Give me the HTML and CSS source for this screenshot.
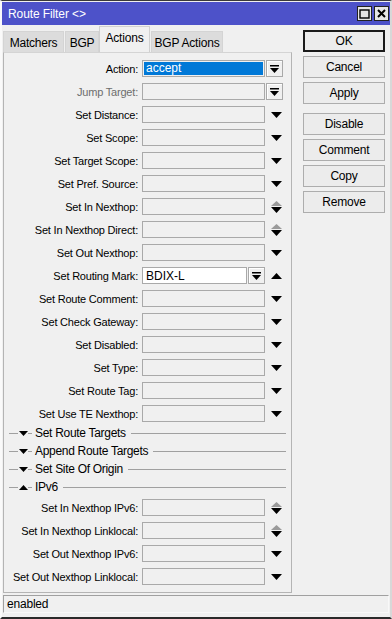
FILE: index.html
```html
<!DOCTYPE html>
<html lang="en">
<head>
    <meta charset="UTF-8">
    <title>Route Filter</title>
    <link rel="stylesheet" href="styles.css">
</head>
<body>
<div class="window">
    <div class="titlebar">
        <span class="title">Route Filter &lt;&gt;</span>
        <div class="winbtns">
            <span class="winbtn"><svg width="11" height="10" viewBox="0 0 11 10"><rect x="1" y="1" width="9" height="8" fill="none" stroke="#000" stroke-width="1.4"/></svg></span>
            <span class="winbtn"><svg width="9" height="9" viewBox="0 0 9 9"><path d="M1 1 L8 8 M8 1 L1 8" stroke="#000" stroke-width="2"/></svg></span>
        </div>
    </div>

    <div class="main">
        <div class="left">
            <div class="tabs">
                <div class="tab t-matchers">Matchers</div>
                <div class="tab t-bgp">BGP</div>
                <div class="tab active t-actions">Actions</div>
                <div class="tab t-bgpact">BGP Actions</div>
            </div>

            <div class="panel">
                <div class="row">
                    <span class="lbl">Action:</span>
                    <span class="field sel"><span class="hl">accept</span></span>
                    <span class="ddbtn"><svg width="9" height="8" viewBox="0 0 9 8"><rect x="0" y="0" width="9" height="1.5" fill="#000"/><path d="M0 3 H9 L4.5 8 Z" fill="#000"/></svg></span>
                </div>
                <div class="row">
                    <span class="lbl off">Jump Target:</span>
                    <span class="field"></span>
                    <span class="ddbtn"><svg width="9" height="8" viewBox="0 0 9 8"><rect x="0" y="0" width="9" height="1.5" fill="#000"/><path d="M0 3 H9 L4.5 8 Z" fill="#000"/></svg></span>
                </div>
                <div class="row">
                    <span class="lbl">Set Distance:</span>
                    <span class="field"></span>
                    <span class="arr"><svg width="11" height="6" viewBox="0 0 11 6"><path d="M0 0 H11 L5.5 6 Z" fill="#000"/></svg></span>
                </div>
                <div class="row">
                    <span class="lbl">Set Scope:</span>
                    <span class="field"></span>
                    <span class="arr"><svg width="11" height="6" viewBox="0 0 11 6"><path d="M0 0 H11 L5.5 6 Z" fill="#000"/></svg></span>
                </div>
                <div class="row">
                    <span class="lbl">Set Target Scope:</span>
                    <span class="field"></span>
                    <span class="arr"><svg width="11" height="6" viewBox="0 0 11 6"><path d="M0 0 H11 L5.5 6 Z" fill="#000"/></svg></span>
                </div>
                <div class="row">
                    <span class="lbl">Set Pref. Source:</span>
                    <span class="field"></span>
                    <span class="arr"><svg width="11" height="6" viewBox="0 0 11 6"><path d="M0 0 H11 L5.5 6 Z" fill="#000"/></svg></span>
                </div>
                <div class="row">
                    <span class="lbl">Set In Nexthop:</span>
                    <span class="field"></span>
                    <span class="arr"><svg width="11" height="12" viewBox="0 0 11 12"><path d="M5.5 0 L11 5 H0 Z" fill="#9a9a9a"/><path d="M0 6 H11 L5.5 12 Z" fill="#000"/></svg></span>
                </div>
                <div class="row">
                    <span class="lbl">Set In Nexthop Direct:</span>
                    <span class="field"></span>
                    <span class="arr"><svg width="11" height="12" viewBox="0 0 11 12"><path d="M5.5 0 L11 5 H0 Z" fill="#9a9a9a"/><path d="M0 6 H11 L5.5 12 Z" fill="#000"/></svg></span>
                </div>
                <div class="row">
                    <span class="lbl">Set Out Nexthop:</span>
                    <span class="field"></span>
                    <span class="arr"><svg width="11" height="6" viewBox="0 0 11 6"><path d="M0 0 H11 L5.5 6 Z" fill="#000"/></svg></span>
                </div>
                <div class="row">
                    <span class="lbl">Set Routing Mark:</span>
                    <span class="field short white">BDIX-L</span>
                    <span class="ddbtn"><svg width="9" height="8" viewBox="0 0 9 8"><rect x="0" y="0" width="9" height="1.5" fill="#000"/><path d="M0 3 H9 L4.5 8 Z" fill="#000"/></svg></span>
                    <span class="arr"><svg width="11" height="6" viewBox="0 0 11 6"><path d="M5.5 0 L11 6 H0 Z" fill="#000"/></svg></span>
                </div>
                <div class="row">
                    <span class="lbl">Set Route Comment:</span>
                    <span class="field"></span>
                    <span class="arr"><svg width="11" height="6" viewBox="0 0 11 6"><path d="M0 0 H11 L5.5 6 Z" fill="#000"/></svg></span>
                </div>
                <div class="row">
                    <span class="lbl">Set Check Gateway:</span>
                    <span class="field"></span>
                    <span class="arr"><svg width="11" height="6" viewBox="0 0 11 6"><path d="M0 0 H11 L5.5 6 Z" fill="#000"/></svg></span>
                </div>
                <div class="row">
                    <span class="lbl">Set Disabled:</span>
                    <span class="field"></span>
                    <span class="arr"><svg width="11" height="6" viewBox="0 0 11 6"><path d="M0 0 H11 L5.5 6 Z" fill="#000"/></svg></span>
                </div>
                <div class="row">
                    <span class="lbl">Set Type:</span>
                    <span class="field"></span>
                    <span class="arr"><svg width="11" height="6" viewBox="0 0 11 6"><path d="M0 0 H11 L5.5 6 Z" fill="#000"/></svg></span>
                </div>
                <div class="row">
                    <span class="lbl">Set Route Tag:</span>
                    <span class="field"></span>
                    <span class="arr"><svg width="11" height="6" viewBox="0 0 11 6"><path d="M0 0 H11 L5.5 6 Z" fill="#000"/></svg></span>
                </div>
                <div class="row">
                    <span class="lbl">Set Use TE Nexthop:</span>
                    <span class="field"></span>
                    <span class="arr"><svg width="11" height="6" viewBox="0 0 11 6"><path d="M0 0 H11 L5.5 6 Z" fill="#000"/></svg></span>
                </div>

                <div class="sections">
                    <div class="section">
                        <span class="sline lead"></span>
                        <svg class="stri" width="9" height="5" viewBox="0 0 9 5"><path d="M0 0 H9 L4.5 5 Z" fill="#000"/></svg>
                        <span class="sline tick"></span>
                        <span class="stext">Set Route Targets</span>
                        <span class="sline rest"></span>
                    </div>
                    <div class="section">
                        <span class="sline lead"></span>
                        <svg class="stri" width="9" height="5" viewBox="0 0 9 5"><path d="M0 0 H9 L4.5 5 Z" fill="#000"/></svg>
                        <span class="sline tick"></span>
                        <span class="stext">Append Route Targets</span>
                        <span class="sline rest"></span>
                    </div>
                    <div class="section">
                        <span class="sline lead"></span>
                        <svg class="stri" width="9" height="5" viewBox="0 0 9 5"><path d="M0 0 H9 L4.5 5 Z" fill="#000"/></svg>
                        <span class="sline tick"></span>
                        <span class="stext">Set Site Of Origin</span>
                        <span class="sline rest"></span>
                    </div>
                    <div class="section">
                        <span class="sline lead"></span>
                        <svg class="stri" width="9" height="5" viewBox="0 0 9 5"><path d="M4.5 0 L9 5 H0 Z" fill="#000"/></svg>
                        <span class="sline tick"></span>
                        <span class="stext">IPv6</span>
                        <span class="sline rest"></span>
                    </div>
                </div>

                <div class="row r-ipv6">
                    <span class="lbl">Set In Nexthop IPv6:</span>
                    <span class="field"></span>
                    <span class="arr"><svg width="11" height="12" viewBox="0 0 11 12"><path d="M5.5 0 L11 5 H0 Z" fill="#9a9a9a"/><path d="M0 6 H11 L5.5 12 Z" fill="#000"/></svg></span>
                </div>
                <div class="row">
                    <span class="lbl">Set In Nexthop Linklocal:</span>
                    <span class="field"></span>
                    <span class="arr"><svg width="11" height="12" viewBox="0 0 11 12"><path d="M5.5 0 L11 5 H0 Z" fill="#9a9a9a"/><path d="M0 6 H11 L5.5 12 Z" fill="#000"/></svg></span>
                </div>
                <div class="row">
                    <span class="lbl">Set Out Nexthop IPv6:</span>
                    <span class="field"></span>
                    <span class="arr"><svg width="11" height="6" viewBox="0 0 11 6"><path d="M0 0 H11 L5.5 6 Z" fill="#000"/></svg></span>
                </div>
                <div class="row">
                    <span class="lbl">Set Out Nexthop Linklocal:</span>
                    <span class="field"></span>
                    <span class="arr"><svg width="11" height="6" viewBox="0 0 11 6"><path d="M0 0 H11 L5.5 6 Z" fill="#000"/></svg></span>
                </div>
            </div>
        </div>

        <div class="right">
            <div class="btn default">OK</div>
            <div class="btn">Cancel</div>
            <div class="btn">Apply</div>
            <div class="btn gap">Disable</div>
            <div class="btn">Comment</div>
            <div class="btn">Copy</div>
            <div class="btn">Remove</div>
        </div>
    </div>

    <div class="status">enabled</div>
</div>
</body>
</html>
```

FILE: styles.css
```css
html, body {
    margin: 0;
    padding: 0;
}

body {
    font-family: 'Liberation Sans', Arial, sans-serif;
    font-size: 11px;
    color: #000;
    background-color: #f0f0f0;
}

.window {
    width: 392px;
    height: 619px;
    box-sizing: border-box;
    border-top: 1px solid #3a3a3a;
    border-bottom: 2px solid #2a2a2a;
    border-left: 2px solid #fafafa;
    border-right: 2px solid #d8d8d8;
    background-color: #f0f0f0;
    display: flex;
    flex-direction: column;
}

.titlebar {
    height: 24px;
    margin-top: 1px;
    background-color: #4d52c9;
    display: flex;
    align-items: center;
    justify-content: space-between;
    padding: 0 1px 0 6px;
}

.title {
    color: #fff;
    font-size: 12px;
    letter-spacing: -0.1px;
}

.winbtns {
    display: flex;
    gap: 2px;
}

.winbtn {
    width: 13px;
    height: 13px;
    border: 1px solid #222;
    background-color: #e6e6e6;
    display: flex;
    align-items: center;
    justify-content: center;
}

.main {
    display: flex;
    flex: 1;
}

.left {
    width: 289px;
    margin-left: 1px;
    display: flex;
    flex-direction: column;
}

/* tabs */
.tabs {
    height: 27px;
    display: flex;
    align-items: flex-end;
}

.tab {
    height: 21px;
    box-sizing: border-box;
    background-color: #dcdcdc;
    border: 1px solid #d4d4d4;
    border-bottom: none;
    display: flex;
    align-items: center;
    justify-content: center;
    font-size: 12px;
    letter-spacing: -0.2px;
    padding-top: 2px;
}

.tab.active {
    height: 26px;
    background-color: #f0f0f0;
    border-color: #d0d0d0;
    padding-top: 0;
    padding-bottom: 4px;
}

.t-matchers { width: 61px; }
.t-bgp { width: 34px; margin-left: 1px; }
.t-actions { width: 51px; }
.t-bgpact { width: 72px; margin-left: 1px; }

.panel {
    height: 541px;
    box-sizing: border-box;
    border: 1px solid #b4b4b4;
    border-top-color: #d4d4d4;
    padding-top: 7px;
}

.row {
    display: flex;
    align-items: center;
    height: 17px;
    margin-bottom: 6px;
}

.lbl {
    width: 134px;
    text-align: right;
    margin-right: 4px;
    white-space: nowrap;
    letter-spacing: -0.2px;
}

.lbl.off {
    color: #6d6d6d;
}

.field {
    width: 123px;
    height: 17px;
    box-sizing: border-box;
    border: 1px solid #a9a9a9;
    background-color: #f0f0f0;
    display: flex;
    align-items: center;
}

.field.short {
    width: 105px;
}

.field.white {
    background-color: #fff;
    font-size: 12px;
    padding-left: 3px;
}

.field.sel {
    padding: 1px;
}

.hl {
    flex: 1;
    height: 100%;
    background-color: #0078d7;
    color: #fff;
    font-size: 12px;
    line-height: 13px;
    padding-left: 2px;
}

.ddbtn {
    width: 17px;
    height: 17px;
    box-sizing: border-box;
    margin-left: 1px;
    border: 1px solid #a9a9a9;
    background-color: #f0f0f0;
    box-shadow: inset 1px 1px 0 #fff;
    display: flex;
    align-items: center;
    justify-content: center;
}

.arr {
    width: 18px;
    height: 17px;
    margin-left: 2px;
    display: flex;
    align-items: center;
    justify-content: center;
}

/* collapsible groups */
.sections {
    margin-top: -4px;
    margin-bottom: 3px;
}

.section {
    height: 18px;
    display: flex;
    align-items: center;
}

.sline {
    height: 1px;
    background-color: #a0a0a0;
}

.sline.lead {
    width: 9px;
    margin-left: 5px;
}

.sline.tick {
    width: 4px;
}

.stext {
    margin-left: 3px;
    margin-right: 5px;
    white-space: nowrap;
    font-size: 12px;
    letter-spacing: -0.3px;
}

.sline.rest {
    flex: 1;
    margin-right: 5px;
}

.stri {
    margin-left: 1px;
}

/* buttons */
.right {
    margin-left: 11px;
    padding-top: 5px;
    display: flex;
    flex-direction: column;
    gap: 4px;
}

.btn {
    width: 82px;
    height: 22px;
    box-sizing: border-box;
    border: 1px solid #adadad;
    background-color: #ececec;
    display: flex;
    align-items: center;
    justify-content: center;
    font-size: 12px;
    letter-spacing: -0.2px;
}

.btn.default {
    border: 2px solid #1a1a1a;
}

.btn.gap {
    margin-top: 5px;
}

.status {
    height: 18px;
    box-sizing: border-box;
    margin: 2px 1px 4px 1px;
    border: 1px solid #f8f8f8;
    border-top-color: #a0a0a0;
    border-left-color: #a0a0a0;
    padding-left: 3px;
    display: flex;
    align-items: center;
    font-size: 12px;
    letter-spacing: -0.2px;
}
```
